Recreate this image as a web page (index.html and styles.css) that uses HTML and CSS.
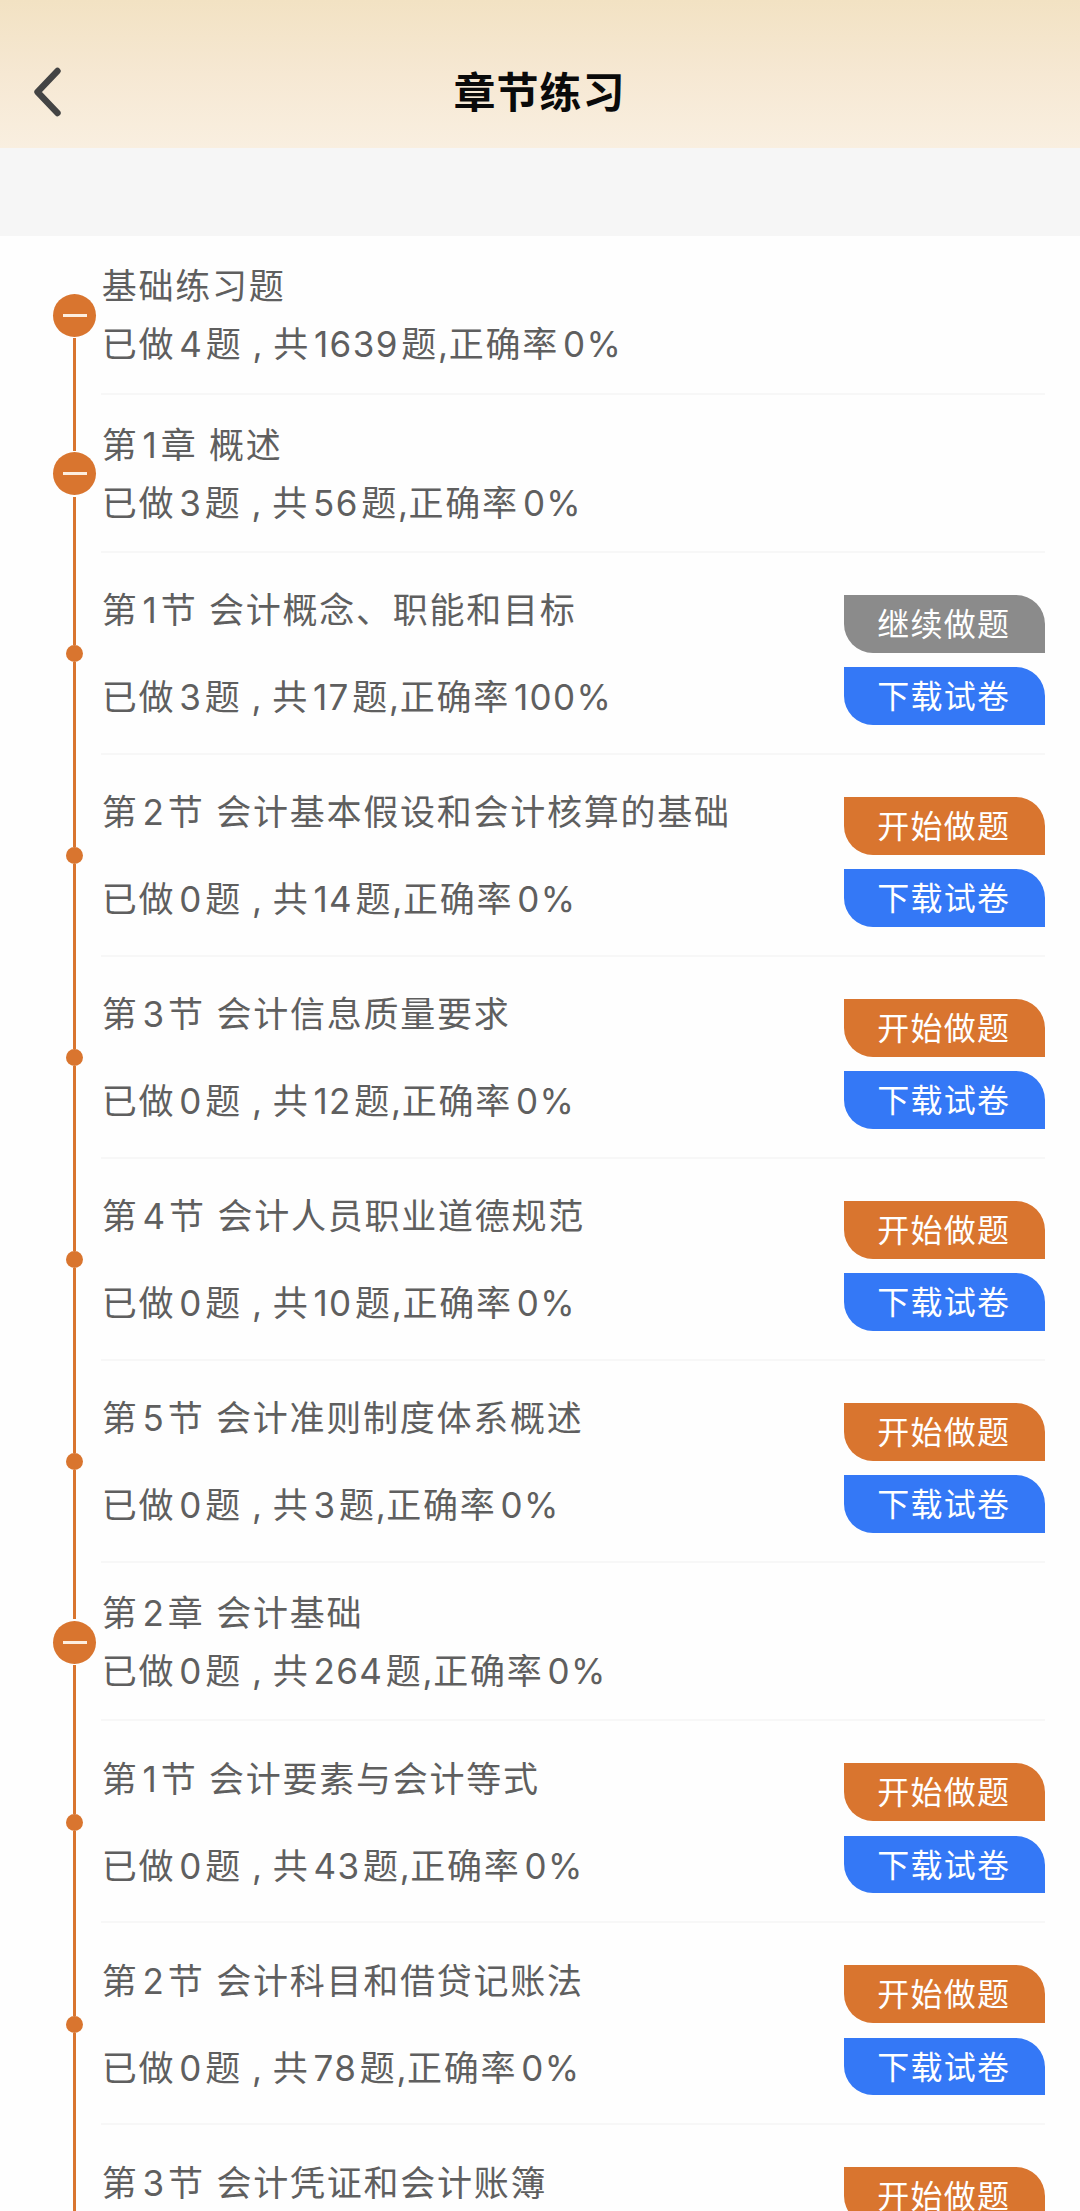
FILE: index.html
```html
<!DOCTYPE html>
<html lang="zh-CN">
<head>
    <meta charset="UTF-8">
    <meta name="viewport" content="width=device-width, initial-scale=1.0">
    <title>章节练习</title>
    <link rel="stylesheet" href="styles.css">
</head>
<body>
    <header class="header">
        <svg class="back" viewBox="0 0 30 52" fill="none" stroke="#444" stroke-width="6.4" stroke-linecap="round" stroke-linejoin="round">
            <path d="M25.5 4L5.5 25L25.5 46"/>
        </svg>
        <h1>章节练习</h1>
        <span class="header-right"></span>
    </header>
    <div class="spacer"></div>

    <div class="list">
        <!-- 总览 -->
        <div class="row chapter first">
            <div class="rail"><span class="minus"></span></div>
            <div class="content">
                <div class="text">
                    <p>基础练习题</p>
                    <p>已做<i>4</i>题<em>,</em>共<i>1639</i>题<s>,</s>正确率<i>0%</i></p>
                </div>
            </div>
        </div>

        <!-- 第1章 -->
        <div class="row chapter">
            <div class="rail"><span class="minus"></span></div>
            <div class="content">
                <div class="text">
                    <p>第<i>1</i>章 概述</p>
                    <p>已做<i>3</i>题<em>,</em>共<i>56</i>题<s>,</s>正确率<i>0%</i></p>
                </div>
            </div>
        </div>
        <div class="row section">
            <div class="rail"><span class="dot"></span></div>
            <div class="content">
                <div class="text">
                    <p>第<i>1</i>节 会计概念、职能和目标</p>
                    <p>已做<i>3</i>题<em>,</em>共<i>17</i>题<s>,</s>正确率<i>100%</i></p>
                </div>
                <div class="buttons">
                    <button class="btn continue">继续做题</button>
                    <button class="btn download">下载试卷</button>
                </div>
            </div>
        </div>
        <div class="row section">
            <div class="rail"><span class="dot"></span></div>
            <div class="content">
                <div class="text">
                    <p>第<i>2</i>节 会计基本假设和会计核算的基础</p>
                    <p>已做<i>0</i>题<em>,</em>共<i>14</i>题<s>,</s>正确率<i>0%</i></p>
                </div>
                <div class="buttons">
                    <button class="btn start">开始做题</button>
                    <button class="btn download">下载试卷</button>
                </div>
            </div>
        </div>
        <div class="row section">
            <div class="rail"><span class="dot"></span></div>
            <div class="content">
                <div class="text">
                    <p>第<i>3</i>节 会计信息质量要求</p>
                    <p>已做<i>0</i>题<em>,</em>共<i>12</i>题<s>,</s>正确率<i>0%</i></p>
                </div>
                <div class="buttons">
                    <button class="btn start">开始做题</button>
                    <button class="btn download">下载试卷</button>
                </div>
            </div>
        </div>
        <div class="row section">
            <div class="rail"><span class="dot"></span></div>
            <div class="content">
                <div class="text">
                    <p>第<i>4</i>节 会计人员职业道德规范</p>
                    <p>已做<i>0</i>题<em>,</em>共<i>10</i>题<s>,</s>正确率<i>0%</i></p>
                </div>
                <div class="buttons">
                    <button class="btn start">开始做题</button>
                    <button class="btn download">下载试卷</button>
                </div>
            </div>
        </div>
        <div class="row section">
            <div class="rail"><span class="dot"></span></div>
            <div class="content">
                <div class="text">
                    <p>第<i>5</i>节 会计准则制度体系概述</p>
                    <p>已做<i>0</i>题<em>,</em>共<i>3</i>题<s>,</s>正确率<i>0%</i></p>
                </div>
                <div class="buttons">
                    <button class="btn start">开始做题</button>
                    <button class="btn download">下载试卷</button>
                </div>
            </div>
        </div>

        <!-- 第2章 -->
        <div class="row chapter">
            <div class="rail"><span class="minus"></span></div>
            <div class="content">
                <div class="text">
                    <p>第<i>2</i>章 会计基础</p>
                    <p>已做<i>0</i>题<em>,</em>共<i>264</i>题<s>,</s>正确率<i>0%</i></p>
                </div>
            </div>
        </div>
        <div class="row section">
            <div class="rail"><span class="dot"></span></div>
            <div class="content">
                <div class="text">
                    <p>第<i>1</i>节 会计要素与会计等式</p>
                    <p>已做<i>0</i>题<em>,</em>共<i>43</i>题<s>,</s>正确率<i>0%</i></p>
                </div>
                <div class="buttons">
                    <button class="btn start">开始做题</button>
                    <button class="btn download">下载试卷</button>
                </div>
            </div>
        </div>
        <div class="row section">
            <div class="rail"><span class="dot"></span></div>
            <div class="content">
                <div class="text">
                    <p>第<i>2</i>节 会计科目和借贷记账法</p>
                    <p>已做<i>0</i>题<em>,</em>共<i>78</i>题<s>,</s>正确率<i>0%</i></p>
                </div>
                <div class="buttons">
                    <button class="btn start">开始做题</button>
                    <button class="btn download">下载试卷</button>
                </div>
            </div>
        </div>
        <div class="row section">
            <div class="rail"><span class="dot"></span></div>
            <div class="content">
                <div class="text">
                    <p>第<i>3</i>节 会计凭证和会计账簿</p>
                </div>
                <div class="buttons">
                    <button class="btn start">开始做题</button>
                </div>
            </div>
        </div>
    </div>
</body>
</html>
```
FILE: styles.css
```css
* {
    box-sizing: border-box;
}
body {
    margin: 0;
    height: 2211px;
    overflow: hidden;
    display: flex;
    flex-direction: column;
    background: #fefefe;
    color: #5f5f5f;
    font-family: Inter, "Noto Sans CJK SC", sans-serif;
}
.header {
    flex: none;
    height: 148px;
    padding: 37px 32px 0;
    display: flex;
    align-items: center;
    justify-content: space-between;
    background: linear-gradient(#f2e2c3, #f6e8d3 50%, #f9efe0);
}
.back {
    width: 30px;
    height: 52px;
}
.header h1 {
    margin: 0;
    padding-top: 1px;
    color: #0a0a0a;
    font-size: 42px;
    font-weight: 700;
    line-height: 60px;
    letter-spacing: 1px;
}
.header-right {
    width: 31px;
}
.spacer {
    flex: none;
    height: 88px;
    background: #f6f6f6;
}
.list {
    flex: 1;
    min-height: 0;
    padding-top: 0.3px;
    overflow: hidden;
}
.row {
    display: flex;
    padding: 0 35px 0 53px;
}
.chapter {
    height: 158.3px;
}
.section {
    height: 202px;
}

/* 时间轴 */
.rail {
    flex: none;
    width: 43px;
    margin-right: 5px;
    display: flex;
    flex-direction: column;
    align-items: center;
}
.rail::before,
.rail::after {
    content: "";
    flex: 1;
    width: 3px;
    background: #d9752f;
}
.first .rail::before {
    background: none;
}
.minus {
    width: 43px;
    height: 43px;
    margin: 1.5px 0;
    border-radius: 50%;
    background: #d9752f;
    display: flex;
    align-items: center;
    justify-content: center;
}
.minus::before {
    content: "";
    width: 24px;
    height: 3px;
    background: #fdeee0;
}
.dot {
    width: 17px;
    height: 17px;
    border-radius: 50%;
    background: #d9752f;
}

.content {
    flex: 1;
    display: flex;
    justify-content: space-between;
    border-bottom: 2px solid #f7f7f7;
}
.text {
    padding-left: 0.8px;
}
.text p {
    margin: 0;
    font-size: 35px;
    line-height: 58px;
    letter-spacing: 1.75px;
    white-space: nowrap;
}
.chapter .text {
    padding-top: 21px;
}
.section .text {
    padding-top: 14.5px;
}
.section .text p {
    line-height: 87px;
}
/* 数字和标点 */
.text i {
    margin: 0 2.5px 0 4px;
    font-style: normal;
    font-size: 35px;
    letter-spacing: 1.4px;
}
.text em {
    margin: 0 10.5px 0 10px;
    font-style: normal;
    letter-spacing: 0;
}
.text s {
    text-decoration: none;
    letter-spacing: 0.5px;
}

.buttons {
    display: flex;
    flex-direction: column;
    gap: 14.7px;
    padding-top: 42.3px;
}
.btn {
    width: 201.5px;
    height: 57.5px;
    padding: 1px 1px 0 0;
    border: none;
    border-radius: 0 29px 0 29px;
    color: #fff;
    font-family: inherit;
    font-size: 32px;
    line-height: 57px;
    letter-spacing: 1.3px;
}
.start {
    background: #d9752f;
}
.continue {
    background: #8b8b8b;
}
.download {
    background: #3478f6;
}
```
